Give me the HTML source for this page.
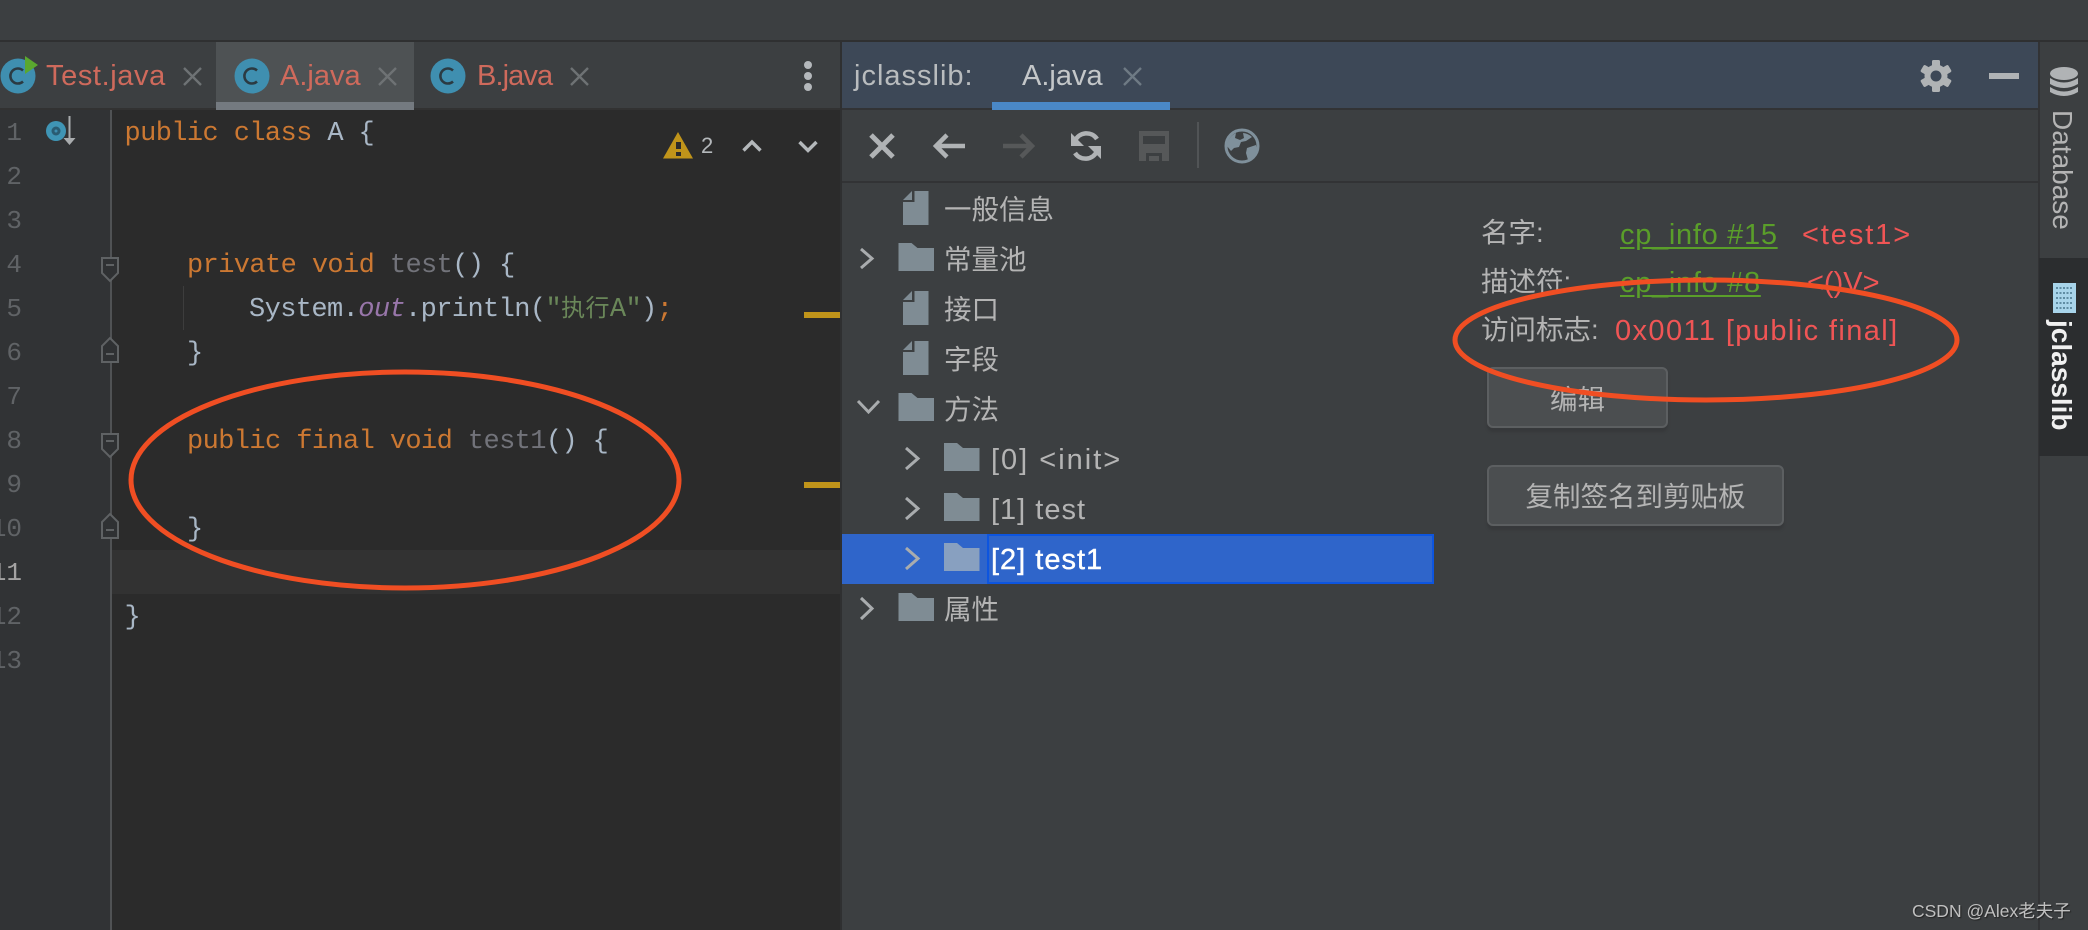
<!DOCTYPE html>
<html><head><meta charset="utf-8"><title>jclasslib</title>
<style>
html,body{margin:0;padding:0;width:2088px;height:930px;overflow:hidden;background:#3c3f41}
#r{position:relative;width:2088px;height:930px;overflow:hidden}
.b{position:absolute}
.t{position:absolute;white-space:pre;font-family:"Liberation Sans","Noto Sans CJK SC",sans-serif;line-height:40px;height:40px}
.c{position:absolute;white-space:pre;font-family:"Liberation Mono","Noto Sans CJK SC",monospace;font-size:27px;letter-spacing:-.6px;line-height:44px;height:44px;color:#a9b7c6}
.n{position:absolute;white-space:pre;font-family:"Liberation Mono",monospace;font-size:26px;line-height:44px;height:44px;color:#606366;right:2066px;text-align:right}
.k{color:#cc7832}.u{color:#72737a}
.tab{font-size:29px;color:#cf6a5c}
.tr{font-size:27.5px;color:#b4b4b4}
.la{font-size:29px;letter-spacing:1px;color:#b4b4b4}
.lb{font-size:27.5px;color:#b4b4b4}
.g{font-size:29px;color:#5a9e2a;letter-spacing:.7px}
.e{font-size:29px;color:#f05555;letter-spacing:1.4px}
.btn{position:absolute;box-sizing:border-box;background:#4b4e50;border:2px solid #5c5f61;border-radius:6px;box-shadow:0 4px 2px #37393b;text-align:center;font-family:"Liberation Sans","Noto Sans CJK SC",sans-serif;font-size:27.5px;color:#b4b4b4}
</style></head><body><div id="r">
<!-- backgrounds -->
<div class="b" style="left:0;top:0;width:2088px;height:40px;background:#3c3f41"></div>
<div class="b" style="left:0;top:40px;width:2088px;height:2px;background:#2f3031"></div>
<div class="b" style="left:0;top:42px;width:840px;height:66px;background:#3c3f41"></div>
<div class="b" style="left:216px;top:42px;width:198px;height:60px;background:#4e5254"></div>
<div class="b" style="left:216px;top:102px;width:198px;height:8px;background:#747a80"></div>
<div class="b" style="left:0;top:108px;width:216px;height:2px;background:#323232"></div>
<div class="b" style="left:414px;top:108px;width:426px;height:2px;background:#323232"></div>
<div class="b" style="left:0;top:110px;width:110px;height:820px;background:#313335"></div>
<div class="b" style="left:110px;top:110px;width:730px;height:820px;background:#2b2b2b"></div>
<div class="b" style="left:110px;top:110px;width:2px;height:820px;background:#505254"></div>
<div class="b" style="left:112px;top:550px;width:728px;height:44px;background:#323232"></div>
<div class="b" style="left:183px;top:286px;width:1px;height:44px;background:#3d3d3d"></div>
<div class="b" style="left:804px;top:312px;width:36px;height:6px;background:#c0941a"></div>
<div class="b" style="left:804px;top:482px;width:36px;height:6px;background:#c0941a"></div>
<div class="b" style="left:840px;top:42px;width:2px;height:888px;background:#2f3031"></div>
<div class="b" style="left:842px;top:42px;width:1196px;height:66px;background:#3d4857"></div>
<div class="b" style="left:842px;top:108px;width:1196px;height:2px;background:#323335"></div>
<div class="b" style="left:992px;top:102px;width:178px;height:8px;background:#4a88c7"></div>
<div class="b" style="left:842px;top:181px;width:1196px;height:2px;background:#323335"></div>
<div class="b" style="left:1197px;top:122px;width:2px;height:46px;background:#515456"></div>
<div class="b" style="left:2038px;top:42px;width:2px;height:888px;background:#323335"></div>
<div class="b" style="left:2039px;top:258px;width:49px;height:198px;background:#2b2d2f"></div>
<div class="b" style="left:842px;top:534px;width:592px;height:50px;background:#2f65ca"></div>
<div class="b" style="left:987px;top:534px;width:447px;height:50px;box-sizing:border-box;border:2px solid #0d55df"></div>

<!-- icons -->
<svg class="b" style="left:0;top:0" width="2088" height="930" viewBox="0 0 2088 930" fill="none">
 <!-- tab icons -->
 <g>
  <circle cx="18" cy="76" r="17.5" fill="#3f8fb0"/><path d="M23 70.500a7.500 7.500 0 1 0 0 11" stroke="#2b3a42" stroke-width="2.600"/>
  <path d="M25 56l13 9-13 9z" fill="#5aa82f"/>
  <circle cx="252" cy="76" r="17.5" fill="#3f8fb0"/><path d="M257 70.500a7.500 7.500 0 1 0 0 11" stroke="#2b3a42" stroke-width="2.600"/>
  <circle cx="448" cy="76" r="17.5" fill="#3f8fb0"/><path d="M453 70.500a7.500 7.500 0 1 0 0 11" stroke="#2b3a42" stroke-width="2.600"/>
  <path d="M184 68l17 17M201 68l-17 17M379 68l17 17M396 68l-17 17M571 68l17 17M588 68l-17 17" stroke="#6e7274" stroke-width="2.400"/>
  <circle cx="808" cy="65" r="4" fill="#b4b8bb"/><circle cx="808" cy="76" r="4" fill="#b4b8bb"/><circle cx="808" cy="87" r="4" fill="#b4b8bb"/>
 </g>
 <!-- gutter icon -->
 <circle cx="56" cy="131" r="10" fill="#3f95b5"/><circle cx="56" cy="131" r="4.500" fill="#2a5c72"/><circle cx="56" cy="131" r="1.500" fill="#3f8fb0"/>
 <path d="M69.500 116v23" stroke="#a9acae" stroke-width="2"/><path d="M63.500 138h12l-6 7z" fill="#a9acae"/>
 <!-- fold marks -->
 <g stroke="#5f6264" stroke-width="2" fill="#2f3133">
  <path d="M102 258h16v15l-8 8-8-8z"/><path d="M106 265h8"/>
  <path d="M102 362v-16l8-8 8 8v16z" /><path d="M106 354h8"/>
  <path d="M102 434h16v15l-8 8-8-8z"/><path d="M106 441h8"/>
  <path d="M102 538v-16l8-8 8 8v16z"/><path d="M106 530h8"/>
 </g>
 <!-- warning -->
 <path d="M678 132l15 26.500h-30z" fill="#c0941a"/><rect x="676" y="142" width="5" height="7" fill="#2b2b2b"/><rect x="676" y="152" width="5" height="4" fill="#2b2b2b"/>
 <path d="M743.500 150.500l8.500-8.500 8.500 8.500M799.500 142l8.500 8.500 8.500-8.500" stroke="#b4b8bb" stroke-width="3.400"/>
 <!-- header close, gear, minimize -->
 <path d="M1124 68l17 17M1141 68l-17 17" stroke="#6e7a84" stroke-width="2.400"/>
 <g fill="#b0b3b5">
  <circle cx="1936" cy="76" r="11.500"/>
  <rect x="1932" y="60" width="8" height="32" rx="1.500"/>
  <rect x="1932" y="60" width="8" height="32" rx="1.500" transform="rotate(60 1936 76)"/>
  <rect x="1932" y="60" width="8" height="32" rx="1.500" transform="rotate(120 1936 76)"/>
 </g>
 <circle cx="1936" cy="76" r="5.500" fill="#3d4857"/>
 <rect x="1989" y="73" width="30" height="6" fill="#b0b3b5"/>
 <!-- toolbar -->
 <path d="M871 135l22 22M893 135l-22 22" stroke="#b0b3b5" stroke-width="5"/>
 <path d="M965 146h-28M947 135l-11 11 11 11" stroke="#b0b3b5" stroke-width="4.500"/>
 <path d="M1003 146h28M1021 135l11 11-11 11" stroke="#565859" stroke-width="4.500"/>
 <path d="M1075 141a12.500 12.500 0 0 1 22-2" stroke="#b0b3b5" stroke-width="4.500"/><path d="M1071 133v13h13z" fill="#b0b3b5"/>
 <path d="M1097 151a12.500 12.500 0 0 1-22 2" stroke="#b0b3b5" stroke-width="4.500"/><path d="M1101 159v-13h-13z" fill="#b0b3b5"/>
 <path d="M1139 131h30v30h-30z" fill="#565859"/><rect x="1143" y="136" width="22" height="8" fill="#3c3f41"/><rect x="1146" y="153" width="16" height="8" fill="#3c3f41"/><rect x="1149" y="156" width="10" height="5" fill="#565859"/>
 <circle cx="1242" cy="146" r="16" fill="#3c3f41" stroke="#7f909b" stroke-width="3"/>
 <path d="M1227 146a15 15 0 0 1 9-13l-1 5 5 2 4-2-1-5a15 15 0 0 1 9 4l-6 4-5 1-2 5-5 1-3 3zM1247 148l9-3 1 5-5 8-4 2-2-7z" fill="#7f909b"/>
 <!-- tree: files -->
 <g fill="#7f8c94">
  <path d="M903 202v23h25.500v-34h-14v11z"/><path d="M903 200l9-9v9z"/>
  <path d="M903 302v23h25.500v-34h-14v11z"/><path d="M903 300l9-9v9z"/>
  <path d="M903 352v23h25.500v-34h-14v11z"/><path d="M903 350l9-9v9z"/>
  <!-- folders -->
  <path d="M898.500 243h13l6 5h16.500v23h-35.500z"/>
  <path d="M898.500 393h13l6 5h16.500v23h-35.500z"/>
  <path d="M898.500 593h13l6 5h16.500v23h-35.500z"/>
  <path d="M944 443h13l6 5h16.500v23h-35.500z"/>
  <path d="M944 493h13l6 5h16.500v23h-35.500z"/>
  <path d="M944 543h13l6 5h16.500v23h-35.500z" fill="#88a0c0"/>
 </g>
 <g stroke="#a9acae" stroke-width="3">
  <path d="M861 249l11 9.500-11 9.500"/>
  <path d="M858 401l10.500 11 10.500-11"/>
  <path d="M906 448l12 10.500-12 10.500"/>
  <path d="M906 498l12 10.500-12 10.500"/>
  <path d="M906 548l12 10.500-12 10.500"/>
  <path d="M861 598l11 10.500-11 10.500"/>
 </g>
 <!-- database icon -->
 <g fill="#b0b3b5">
  <ellipse cx="2064" cy="73.500" rx="14" ry="6.500"/>
  <path d="M2050 78q14 9 28 0v6q-14 8-28 0z"/>
  <path d="M2050 87q14 9 28 0v5q-14 8-28 0z"/>
 </g>
 <!-- jclasslib icon -->
 <rect x="2053" y="283" width="23" height="30" fill="#a8d4ea"/>
 <path d="M2056 288h17M2056 293h17M2056 298h17M2056 303h17M2056 308h17" stroke="#5f8ca3" stroke-width="2" stroke-dasharray="2 1.500"/>
</svg>

<!-- tabs text -->
<div class="t tab" style="left:46px;top:56px;letter-spacing:.6px">Test.java</div>
<div class="t tab" style="left:280px;top:56px">A.java</div>
<div class="t tab" style="left:477px;top:56px;letter-spacing:-.9px">B.java</div>

<!-- line numbers -->
<div class="n" style="top:111px">1</div><div class="n" style="top:155px">2</div><div class="n" style="top:199px">3</div>
<div class="n" style="top:243px">4</div><div class="n" style="top:287px">5</div><div class="n" style="top:331px">6</div>
<div class="n" style="top:375px">7</div><div class="n" style="top:419px">8</div><div class="n" style="top:463px">9</div>
<div class="n" style="top:507px">10</div><div class="n" style="top:551px;color:#a4a3a3">11</div><div class="n" style="top:595px">12</div><div class="n" style="top:639px">13</div>

<!-- code -->
<div class="c" style="left:124.500px;top:112px"><span class="k">public class</span> A {</div>
<div class="c" style="left:187px;top:244px"><span class="k">private void</span> <span class="u">test</span>() {</div>
<div class="c" style="left:249px;top:288px">System.<i style="color:#9876aa">out</i>.println(<span style="color:#6a8759">"<span style="font-size:24px;letter-spacing:.4px">执行</span>A"</span>)<span class="k">;</span></div>
<div class="c" style="left:187px;top:332px">}</div>
<div class="c" style="left:187px;top:420px"><span class="k">public final void</span> <span class="u">test1</span>() {</div>
<div class="c" style="left:187px;top:508px">}</div>
<div class="c" style="left:124.500px;top:596px">}</div>
<div class="t" style="left:701px;top:126px;font-size:22px;color:#b4b8bb">2</div>

<!-- header text -->
<div class="t" style="left:854px;top:56px;font-size:29px;letter-spacing:1px;color:#b9bcbe">jclasslib:</div>
<div class="t" style="left:1022px;top:56px;font-size:29px;color:#c4c7c9">A.java</div>

<!-- tree text -->
<div class="t tr" style="left:944px;top:190px">一般信息</div>
<div class="t tr" style="left:944px;top:240px">常量池</div>
<div class="t tr" style="left:944px;top:290px">接口</div>
<div class="t tr" style="left:944px;top:340px">字段</div>
<div class="t tr" style="left:944px;top:390px">方法</div>
<div class="t la" style="left:991px;top:440px;letter-spacing:2px">[0] &lt;init&gt;</div>
<div class="t la" style="left:991px;top:490px">[1] test</div>
<div class="t la" style="left:991px;top:540px;color:#fff;-webkit-text-stroke:.4px #fff">[2] test1</div>
<div class="t tr" style="left:944px;top:590px">属性</div>

<!-- details -->
<div class="t lb" style="left:1481px;top:213px">名字:</div>
<div class="t lb" style="left:1481px;top:262px">描述符:</div>
<div class="t lb" style="left:1481px;top:310px">访问标志:</div>
<div class="t g" style="left:1620px;top:215px;text-decoration:underline;text-underline-offset:3px">cp_info #15</div>
<div class="t e" style="left:1802px;top:215px;letter-spacing:1.9px">&lt;test1&gt;</div>
<div class="t g" style="left:1620px;top:263px;text-decoration:underline;text-underline-offset:3px">cp_info #8</div>
<div class="t e" style="left:1807px;top:263px;letter-spacing:0">&lt;()V&gt;</div>
<div class="t e" style="left:1615px;top:311px">0x0011 [public final]</div>

<div class="btn" style="left:1487px;top:367px;width:181px;height:61px;line-height:62px">编辑</div>
<div class="btn" style="left:1487px;top:465px;width:297px;height:61px;line-height:60px">复制签名到剪贴板</div>

<!-- sidebar -->
<div class="t" style="left:2041.500px;top:110px;font-size:28px;color:#b4b4b4;transform-origin:0 0;transform:translate(40px,0) rotate(90deg)">Database</div>
<div class="t" style="left:2041px;top:320px;font-size:28px;font-weight:bold;color:#f0f0f0;transform-origin:0 0;transform:translate(40px,0) rotate(90deg)">jclasslib</div>

<!-- annotations -->
<svg class="b" style="left:0;top:0" width="2088" height="930" viewBox="0 0 2088 930" fill="none">
 <ellipse cx="405" cy="480" rx="274" ry="108" stroke="#f04e23" stroke-width="5"/>
 <ellipse cx="1706" cy="340" rx="251" ry="60" stroke="#f04e23" stroke-width="5"/>
</svg>

<div class="t" style="left:1912px;top:891px;font-size:17.500px;color:#c0c0c0;text-shadow:1px 1px 1px #222">CSDN @Alex老夫子</div>
</div></body></html>
